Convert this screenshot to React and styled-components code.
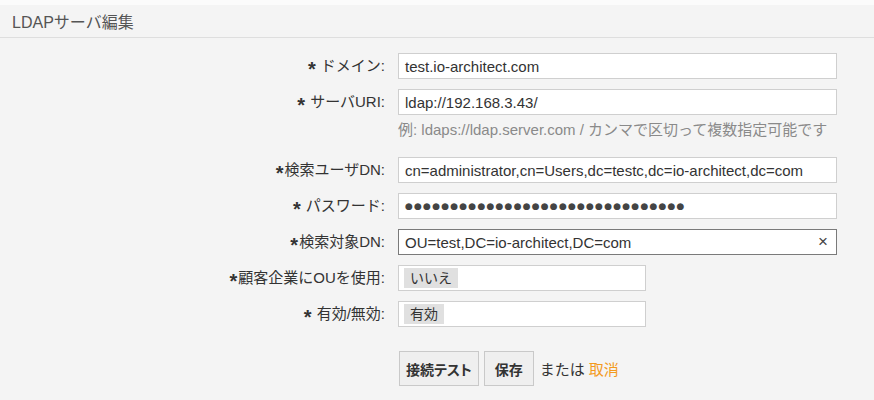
import styled, { createGlobalStyle } from "styled-components";

const GlobalStyle = createGlobalStyle`
  html, body {
    margin: 0;
    padding: 0;
    background: #fbfbfb;
  }
  body {
    font-family: "Liberation Sans", "Noto Sans CJK JP", sans-serif;
    color: #333;
  }
`;

const Panel = styled.div`
  margin-top: 5px;
  background-color: #f4f4f4;
  min-height: 395px;
`;

const Header = styled.div`
  height: 32px;
  border-bottom: 1px solid #dedede;
  padding-left: 12px;
  display: flex;
  align-items: center;
  font-size: 16px;
  color: #555;
`;

const Form = styled.div`
  padding-top: 15px;
  display: flex;
  flex-direction: column;
  gap: 10px;
`;

const Row = styled.div`
  display: flex;
  align-items: flex-start;
`;

const Label = styled.div`
  width: 398px;
  padding-right: 13px;
  box-sizing: border-box;
  flex-shrink: 0;
  text-align: right;
  font-size: 15px;
  line-height: 26px;
  height: 26px;
  color: #333;
  white-space: nowrap;
`;

const Star = styled.span`
  font-weight: bold;
  font-size: 20px;
  line-height: 10px;
  position: relative;
  top: 5px;
  margin-right: ${({ $gap }) => ($gap ? "5px" : "1px")};
`;

const Control = styled.div`
  display: flex;
  flex-direction: column;
`;

const InputBox = styled.div`
  position: relative;
  width: ${({ $w }) => $w || 439}px;
  height: 26px;
  box-sizing: border-box;
  background: #fff;
  border: 1px solid ${({ $focus }) => ($focus ? "#7a7a7a" : "#cfcfcf")};
  padding: 0 6px;
  display: flex;
  align-items: center;
  font-size: 15px;
  color: #333;
  white-space: nowrap;
  overflow: hidden;
`;

const Dots = styled.span`
  font-family: "DejaVu Sans", sans-serif;
  font-size: 9px;
  letter-spacing: 1.2px;
  color: #444;
`;

const Clear = styled.span`
  position: absolute;
  right: 8px;
  top: 50%;
  transform: translateY(-50%);
  font-size: 17px;
  color: #444;
`;

const Chip = styled.span`
  background: #e0e0e0;
  padding: 0 6px;
  margin-left: -1px;
  height: 20px;
  line-height: 20px;
  font-size: 14px;
  color: #333;
`;

const Hint = styled.div`
  margin: 5px 0 7px;
  line-height: 20px;
  font-size: 15px;
  color: #8a8a8a;
  white-space: nowrap;
`;

const Actions = styled.div`
  margin-top: 24px;
  padding-left: 399px;
  display: flex;
  align-items: center;
  gap: 5px;
  font-size: 15px;
`;

const Button = styled.button`
  height: 35px;
  padding: 0 ${({ $pad }) => $pad}px;
  background: #efefef;
  border: 1px solid #c9c9c9;
  font-family: "Liberation Sans", "Noto Sans CJK JP", sans-serif;
  font-weight: 600;
  font-size: 14px;
  color: #333;
  font-feature-settings: "palt";
`;

const Or = styled.span`
  margin-left: 1px;
  color: #333;
`;

const Cancel = styled.a`
  color: #f39a1e;
  margin-left: -1px;
`;

const Field = ({ label, gap, children }) => (
  <Row>
    <Label>
      <Star $gap={gap}>*</Star>
      {label}
    </Label>
    <Control>{children}</Control>
  </Row>
);

const App = () => {
  return (
    <>
      <GlobalStyle />
      <Panel>
        <Header>LDAPサーバ編集</Header>
        <Form>
          <Field label="ドメイン:" gap>
            <InputBox>test.io-architect.com</InputBox>
          </Field>
          <Field label="サーバURI:" gap>
            <InputBox>ldap://192.168.3.43/</InputBox>
            <Hint>例: ldaps://ldap.server.com / カンマで区切って複数指定可能です</Hint>
          </Field>
          <Field label="検索ユーザDN:">
            <InputBox>cn=administrator,cn=Users,dc=testc,dc=io-architect,dc=com</InputBox>
          </Field>
          <Field label="パスワード:" gap>
            <InputBox>
              <Dots>{"●".repeat(31)}</Dots>
            </InputBox>
          </Field>
          <Field label="検索対象DN:">
            <InputBox $focus>
              OU=test,DC=io-architect,DC=com
              <Clear>×</Clear>
            </InputBox>
          </Field>
          <Field label="顧客企業にOUを使用:">
            <InputBox $w={248}>
              <Chip>いいえ</Chip>
            </InputBox>
          </Field>
          <Field label="有効/無効:" gap>
            <InputBox $w={248}>
              <Chip>有効</Chip>
            </InputBox>
          </Field>
        </Form>
        <Actions>
          <Button $pad={6}>接続テスト</Button>
          <Button $pad={10}>保存</Button>
          <Or>または</Or>
          <Cancel>取消</Cancel>
        </Actions>
      </Panel>
    </>
  );
};

export default App;
